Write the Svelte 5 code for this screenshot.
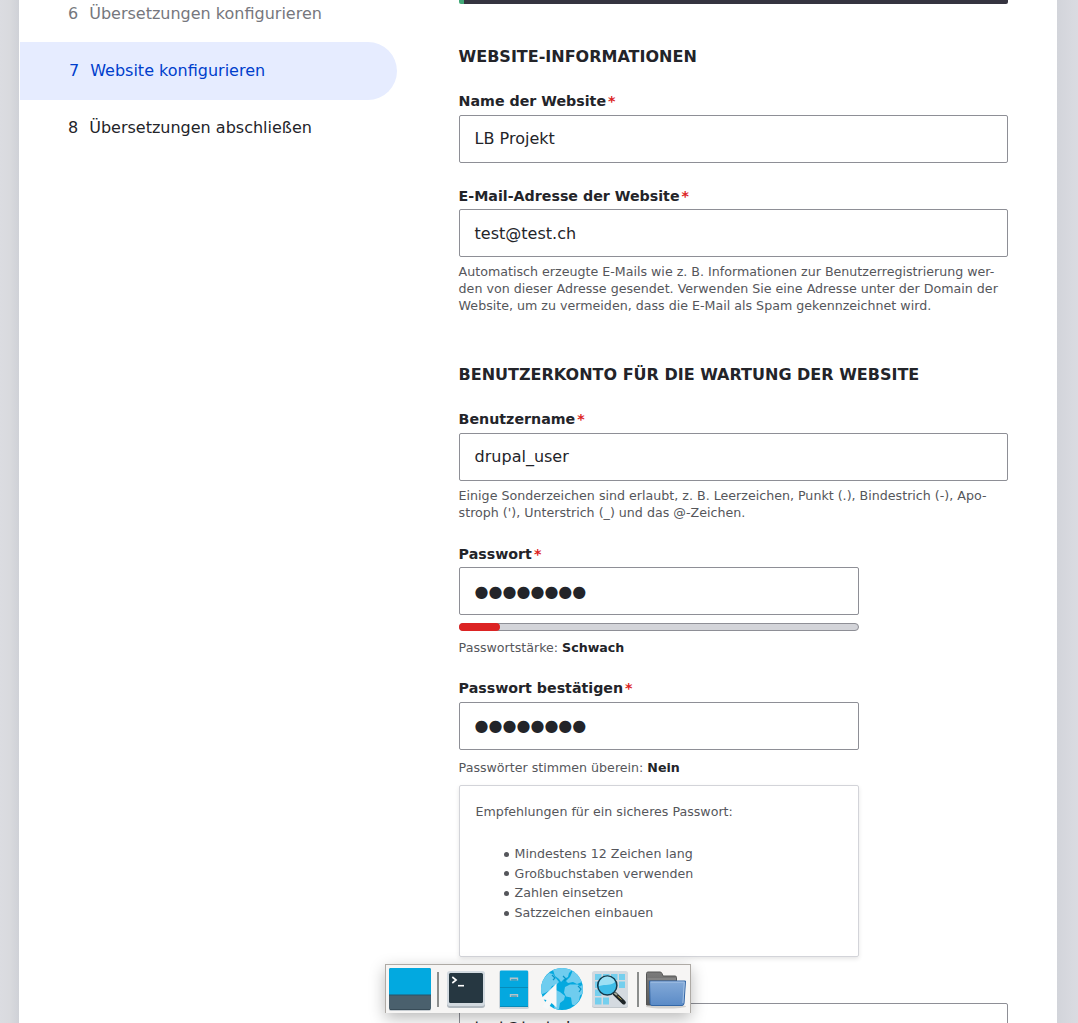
<script>
  const steps = [
    { n: 6, label: 'Übersetzungen konfigurieren', state: 'done' },
    { n: 7, label: 'Website konfigurieren', state: 'active' },
    { n: 8, label: 'Übersetzungen abschließen', state: 'todo' }
  ];
  const tips = [
    'Mindestens 12 Zeichen lang',
    'Großbuchstaben verwenden',
    'Zahlen einsetzen',
    'Satzzeichen einbauen'
  ];
  const dots = '●'.repeat(8);
</script>

{#snippet label(text)}
  <div class="label">{text}<span class="star">*</span></div>
{/snippet}

<div class="screen">
  <div class="edge left"></div>
  <div class="page">
    <nav>
      {#each steps as s}
        <div class="step {s.state}"><span class="num">{s.n}</span><span>{s.label}</span></div>
      {/each}
    </nav>
    <main>
      <div class="message"></div>

      <h2>Website-Informationen</h2>
      <div class="field">
        {@render label('Name der Website')}
        <div class="input">LB Projekt</div>
      </div>
      <div class="field low mail">
        {@render label('E-Mail-Adresse der Website')}
        <div class="input">test@test.ch</div>
        <p class="desc">
          Automatisch erzeugte E-Mails wie z. B. Informationen zur Benutzerregistrierung wer-<br />den von dieser Adresse gesendet. Verwenden Sie eine Adresse unter der Domain der<br />Website, um zu vermeiden, dass die E-Mail als Spam gekennzeichnet wird.
        </p>
      </div>

      <h2 class="second">Benutzerkonto für die Wartung der Website</h2>
      <div class="field">
        {@render label('Benutzername')}
        <div class="input">drupal_user</div>
        <p class="desc">
          Einige Sonderzeichen sind erlaubt, z. B. Leerzeichen, Punkt (.), Bindestrich (-), Apo-<br />stroph ('), Unterstrich (_) und das @-Zeichen.
        </p>
      </div>
      <div class="field low short pass">
        {@render label('Passwort')}
        <div class="input"><span class="dots">{dots}</span></div>
        <div class="meter"><div class="fill"></div></div>
        <div class="status">Passwortstärke: <b>Schwach</b></div>
      </div>
      <div class="field short confirm">
        {@render label('Passwort bestätigen')}
        <div class="input"><span class="dots">{dots}</span></div>
        <div class="status match">Passwörter stimmen überein: <b>Nein</b></div>
        <div class="tips">
          <div>Empfehlungen für ein sicheres Passwort:</div>
          <ul>
            {#each tips as t}<li>{t}</li>{/each}
          </ul>
        </div>
      </div>
      <div class="field low last">
        {@render label('E-Mail-Adresse')}
        <div class="input">test@test.ch</div>
      </div>
    </main>
  </div>
  <div class="edge right"></div>

  <div class="dock">
    <svg viewBox="0 0 48 48">
      <rect x="3" y="4" width="42" height="42" rx="2" fill="#c5cbd0" />
      <rect x="3" y="3" width="42" height="42" rx="2" fill="#4a606d" />
      <path d="M3 30V5a2 2 0 0 1 2-2h38a2 2 0 0 1 2 2v25z" fill="#02a9e0" />
      <path d="M3 30h42" stroke="#27536b" />
      <path d="M4 44.5h40" stroke="#384c58" />
    </svg>
    <div class="sep"></div>
    <svg viewBox="0 0 48 48">
      <rect x="5" y="7" width="38" height="36" rx="3" fill="#b0b8bf" />
      <rect x="5" y="6" width="38" height="35" rx="3" fill="#d3dae0" />
      <rect x="7" y="8" width="34" height="30" rx="1.5" fill="#263741" />
      <path d="M10.300 12l3.800 3-3.800 3" fill="none" stroke="#fff" stroke-width="1.6" />
      <path d="M16 20.700h6" stroke="#fff" stroke-width="1.6" />
    </svg>
    <svg viewBox="0 0 48 48">
      <rect x="9" y="6" width="30" height="38" rx="2" fill="#ccd4da" />
      <rect x="10" y="5.500" width="28" height="36.500" rx="1" fill="#04a8df" />
      <path d="M10 22.500h28M10 41.500h28" stroke="#078bb9" />
      <path d="M20.500 15.500v-2.200h7v2.200M20.500 32v-2.200h7v2.200" fill="none" stroke="#b5c3ca" stroke-width="1.4" />
      <path d="M21 15h6M21 31.500h6" stroke="#78a0ae" />
    </svg>
    <svg viewBox="0 0 48 48">
      <defs><clipPath id="globe"><circle cx="24" cy="24" r="21" /></clipPath></defs>
      <circle cx="24" cy="24" r="21" fill="#04a9df" />
      <g clip-path="url(#globe)" fill="#6fcdef">
        <path d="M2 24C3 18 6 12 11 8l4 1 2 3 4 5-3 3-4 1-2 4-5 3-5 2z" />
        <path d="M15 5l7-3h9l3 3-3 3-1 4-4 2-3 3-2-3-4-3z" />
        <path d="M35 5l8 7 1 5-5 2-4-2-5 1-2-2 4-4z" />
        <path d="M27 22l5-2.500h8l2 2 3-2v9l-3 2-1 5-4 5-3-1-1-7-5-1-2-4z" />
        <path d="M18 25l4 2 5 4-1 4-4 3-1 6-5 1z" />
      </g>
      <path d="M25 11l3 3-2 2M14 10l3 3-2 2M40 21l3 3-2 3" fill="none" stroke="#0795c7" stroke-width="1.2" />
      <path d="M18.500 18.500v24l-5-4.500-4 6.500-4.800-2.700 3.800-6.800-6-1z" fill="#f7f8f8" />
    </svg>
    <svg viewBox="0 0 48 48">
      <rect x="6" y="7" width="36" height="36" rx="2.5" fill="#c1c7cc" />
      <rect x="6" y="6" width="36" height="36" rx="2.5" fill="#d4dae0" />
      <path fill="#74cfee" d="M9 9h6.500v6H9zM17 9h6.500v6H17zM25 9h6.500v6H25zM33 9h6v6h-6zM9 16.500h6.500V23H9zM33 16.500h6V23h-6zM9 24.500h6.500V31H9zM9 32.500h6.500v7H9zM17 32.500h6v7h-6z" />
      <path d="M28.500 28.500l9.300 9" stroke="#1d2529" stroke-width="4" stroke-linecap="round" />
      <path d="M28 27.500l3 2.500" stroke="#a4a697" stroke-width="2" />
      <path d="M31.500 31l4 3.500" stroke="#c8ad58" stroke-width="1" />
      <circle cx="21.300" cy="20.500" r="9.600" fill="#3fbde8" stroke="#15394a" stroke-width="1.500" />
      <path d="M13 21a8.300 8.300 0 0 1 16-4c-4 4-9 2-16 4z" fill="#9de0f4" />
    </svg>
    <div class="sep"></div>
    <svg viewBox="0 0 48 48">
      <defs>
        <linearGradient id="back" x1="0" y1="0" x2="0" y2="1"><stop offset="0" stop-color="#7b7b7b" /><stop offset="1" stop-color="#585858" /></linearGradient>
        <linearGradient id="front" x1="0" y1="0" x2="0" y2="1"><stop offset="0" stop-color="#84aad8" /><stop offset="1" stop-color="#5b8bc7" /></linearGradient>
      </defs>
      <ellipse cx="24" cy="41.500" rx="20" ry="2" fill="#d2d1cf" />
      <path d="M4.500 40V8.500q0-1.500 1.500-1.500h12q1.500 0 2 1.500l1 2.500h12q1.500 0 1.500 1.500V40z" fill="url(#back)" stroke="#555" />
      <path d="M5.500 14h28.500" stroke="#959595" />
      <path d="M7.500 16h36l-1.500 22.500q-.2 2-2 2H10q-1.800 0-1.900-2z" fill="url(#front)" stroke="#3467a6" />
      <path d="M8.700 17.100h33.600l-1.400 21" fill="none" stroke="#a5c2e4" />
    </svg>
  </div>
</div>

<style>
  :global(body) { background: #fff; overflow: hidden; }
  .screen {
    position: relative;
    display: flex;
    height: 1023px;
    overflow: hidden;
    font: 16px/24px "DejaVu Sans", sans-serif;
    color: #232429;
  }
  .edge { flex: none; }
  .left { width: 19px; background: linear-gradient(90deg, #dbdce1, #d9dade 50%, #cfd1d7); }
  .right { width: 21px; background: linear-gradient(90deg, #d2d4da, #d9dae0 80%, #dadbe1); }
  .page { flex: 1; display: flex; min-width: 0; }
  nav { width: 439.6px; flex: none; margin-top: -15px; }
  .step { display: flex; align-items: center; gap: 11px; height: 57px; padding-left: 49px; }
  .done { color: #76777d; }
  .active {
    height: 58px;
    width: 328px;
    margin: 0 0 -1px 1px;
    border-radius: 0 29px 29px 0;
    background: #e6ecff;
    color: #003ecc;
  }
  main { width: 549px; flex: none; }
  .message {
    box-sizing: border-box;
    height: 4px;
    background: #353440;
    border-left: 5px solid #42a877;
    border-radius: 0 0 2px 2px;
  }
  h2 { margin: 41px 0 23px; font-size: 16px; line-height: 24px; text-transform: uppercase; white-space: nowrap; }
  .label { height: 18px; margin-bottom: 5px; font-size: 14.22px; line-height: 18px; font-weight: bold; }
  .low .label { margin-bottom: 4px; }
  .star { margin-left: 2px; color: #dc2323; }
  .input {
    box-sizing: border-box;
    height: 48px;
    padding: 11px 15px;
    border: 1px solid #8e8f96;
    border-radius: 2px;
    background: #fff;
    line-height: 24px;
  }
  .low .input { padding-top: 12px; }
  .short { width: 400px; }
  .mail { margin-top: 24px; }
  .desc { margin: 6px 0 0; font-size: 12.65px; line-height: 17px; color: #55565b; white-space: nowrap; }
  .second { margin-top: 49px; }
  .pass { margin-top: 24px; }
  .dots { font-size: 16px; }
  .meter { box-sizing: border-box; height: 8px; margin-top: 8px; border: 1px solid #8e8f96; border-radius: 5px; background: #d3d4d9; }
  .fill { width: 41px; height: 8px; margin: -1px; border-radius: 4px; background: #dc2323; }
  .status { margin-top: 8px; font-size: 12.64px; line-height: 17px; color: #55565b; }
  .status b { color: #232429; }
  .confirm { margin-top: 23px; }
  .match { margin-top: 9px; }
  .tips {
    box-sizing: border-box;
    height: 172px;
    margin-top: 9px;
    padding: 16px;
    border: 1px solid #d3d4d9;
    border-radius: 2px;
    box-shadow: 0 2px 4px rgba(0, 0, 0, 0.1);
    font-size: 12.64px;
    line-height: 19.6px;
    color: #55565b;
  }
  .tips ul { margin: 22.4px 0 0; padding-left: 28px; list-style: none; }
  .tips li { display: flex; align-items: center; gap: 6px; }
  .tips li::before { content: ""; width: 5px; height: 5px; margin-top: 1px; border-radius: 50%; background: currentColor; }
  .last { margin-top: 24px; }
  .dock {
    position: absolute;
    left: 385px;
    top: 964px;
    display: flex;
    border: 1px solid #aeaaa5;
    border-bottom: 0;
    background: #f6f5f4;
    box-shadow: 0 5px 16px rgba(0, 0, 0, 0.28);
  }
  .dock svg { width: 48px; height: 48px; display: block; }
  .sep { width: 2px; height: 35px; margin: 7px 3px 0; background: #8b8d8c; }
</style>
